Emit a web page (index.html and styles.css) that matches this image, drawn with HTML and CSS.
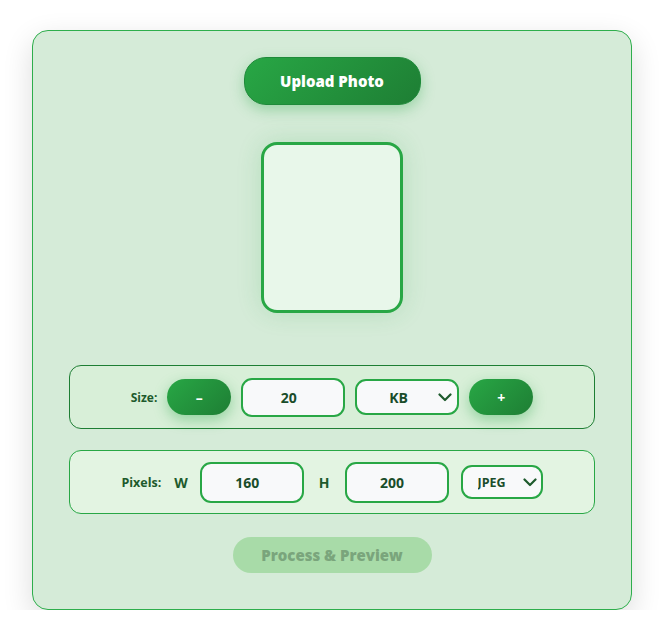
FILE: index.html
```html
<!DOCTYPE html>
<html>
<head>
<meta charset="utf-8">
<link rel="stylesheet" href="styles.css">
</head>
<body>
<div class="card">
  <button class="upload">Upload Photo</button>
  <div class="frame"></div>
  <div class="row row-size">
    <span class="label">Size:</span>
    <button class="step">–</button>
    <input class="field" type="text" value="20">
    <div class="select-wrap wide">
      <select class="select"><option>KB</option></select>
      <svg class="chev" width="14" height="9" viewBox="0 0 14 9"><path d="M1.5 1.5 L7 7 L12.5 1.5" fill="none" stroke="#1d5a2c" stroke-width="2.2" stroke-linecap="round" stroke-linejoin="round"/></svg>
    </div>
    <button class="step">+</button>
  </div>
  <div class="row row-pixels">
    <span class="label label-px">Pixels:</span>
    <span class="dim">W</span>
    <input class="field tall" type="text" value="160">
    <span class="dim dim-h">H</span>
    <input class="field tall" type="text" value="200">
    <div class="select-wrap narrow">
      <select class="select small"><option>JPEG</option></select>
      <svg class="chev" width="14" height="9" viewBox="0 0 14 9"><path d="M1.5 1.5 L7 7 L12.5 1.5" fill="none" stroke="#1d5a2c" stroke-width="2.2" stroke-linecap="round" stroke-linejoin="round"/></svg>
    </div>
  </div>
  <button class="process" disabled>Process &amp; Preview</button>
</div>
</body>
</html>
```
FILE: styles.css
```css
* { box-sizing: border-box; }
body {
  margin: 0;
  background: #ffffff;
  font-family: "Open Sans", "Noto Sans", sans-serif;
}
.card {
  width: 600px;
  height: 580px;
  margin: 30px auto 0 32px;
  background: #d5ebd8;
  border: 1px solid #2eae4c;
  border-radius: 16px;
  box-shadow: 0 10px 30px rgba(0,0,0,0.14);
  padding: 26px 36px 0 36px;
  display: flex;
  flex-direction: column;
  align-items: center;
}
.upload {
  width: 177px;
  height: 48px;
  border: 1px solid #1f8a3a;
  border-radius: 22px;
  background: linear-gradient(135deg, #28a745, #1e7e34);
  color: #fff;
  font-family: inherit;
  font-weight: 800;
  font-size: 15px;
  box-shadow: 0 5px 14px rgba(40,167,69,0.35);
  cursor: pointer;
  padding: 0;
}
.frame {
  margin-top: 37px;
  width: 142px;
  height: 171px;
  border: 3px solid #28a745;
  border-radius: 16px;
  background: #e8f7ea;
  box-shadow: 0 0 24px rgba(40,167,69,0.18);
}
.row {
  width: 526px;
  height: 64px;
  border-radius: 12px;
  display: flex;
  align-items: center;
  justify-content: center;
  gap: 10px;
}
.row-size {
  margin-top: 52px;
  border: 1px solid #1e7e34;
  background: #d8efd8;
}
.row-pixels {
  margin-top: 21px;
  border: 1px solid #28a745;
  background: #e3f4e2;
  gap: 12px;
}
.label {
  font-weight: 700;
  font-size: 12px;
  color: #1d5a2c;
  margin-right: 0;
}
.label-px { font-size: 12.5px; margin-right: 1px; }
.dim {
  font-weight: 700;
  font-size: 14px;
  color: #1d5a2c;
}
.dim-h { margin: 0 3px; }
.step {
  width: 64px;
  height: 36px;
  border: none;
  border-radius: 18px;
  background: linear-gradient(135deg, #28a745, #1e7e34);
  color: #fff;
  font-family: inherit;
  font-weight: 700;
  font-size: 14px;
  box-shadow: 0 5px 14px rgba(40,167,69,0.4);
  padding: 0;
}
.field {
  width: 104px;
  height: 39px;
  border: 2px solid #28a745;
  border-radius: 11px;
  background: #f8f9fa;
  text-align: center;
  font-family: inherit;
  font-weight: 700;
  font-size: 14px;
  color: #1a4d2a;
  outline: none;
  padding: 0 9px 0 0;
}
.field.tall { height: 41px; }
.select-wrap {
  position: relative;
  display: flex;
}
.select {
  appearance: none;
  -webkit-appearance: none;
  width: 104px;
  height: 36px;
  border: 2px solid #28a745;
  border-radius: 11px;
  background: #f8f9fa;
  font-family: inherit;
  font-weight: 700;
  font-size: 14px;
  color: #1a4d2a;
  padding: 0 0 0 32px;
  outline: none;
}
.select.small {
  width: 82px;
  height: 34px;
  font-size: 12.5px;
  padding-left: 15px;
}
.chev {
  position: absolute;
  right: 7px;
  top: 14px;
  pointer-events: none;
}
.narrow .chev { right: 6px; top: 13px; }
.process {
  margin-top: 23px;
  width: 199px;
  height: 36px;
  border: none;
  border-radius: 18px;
  background: #a8dba8;
  color: #7aa57c;
  font-family: inherit;
  font-weight: 800;
  font-size: 15px;
  padding: 0;
}
```
